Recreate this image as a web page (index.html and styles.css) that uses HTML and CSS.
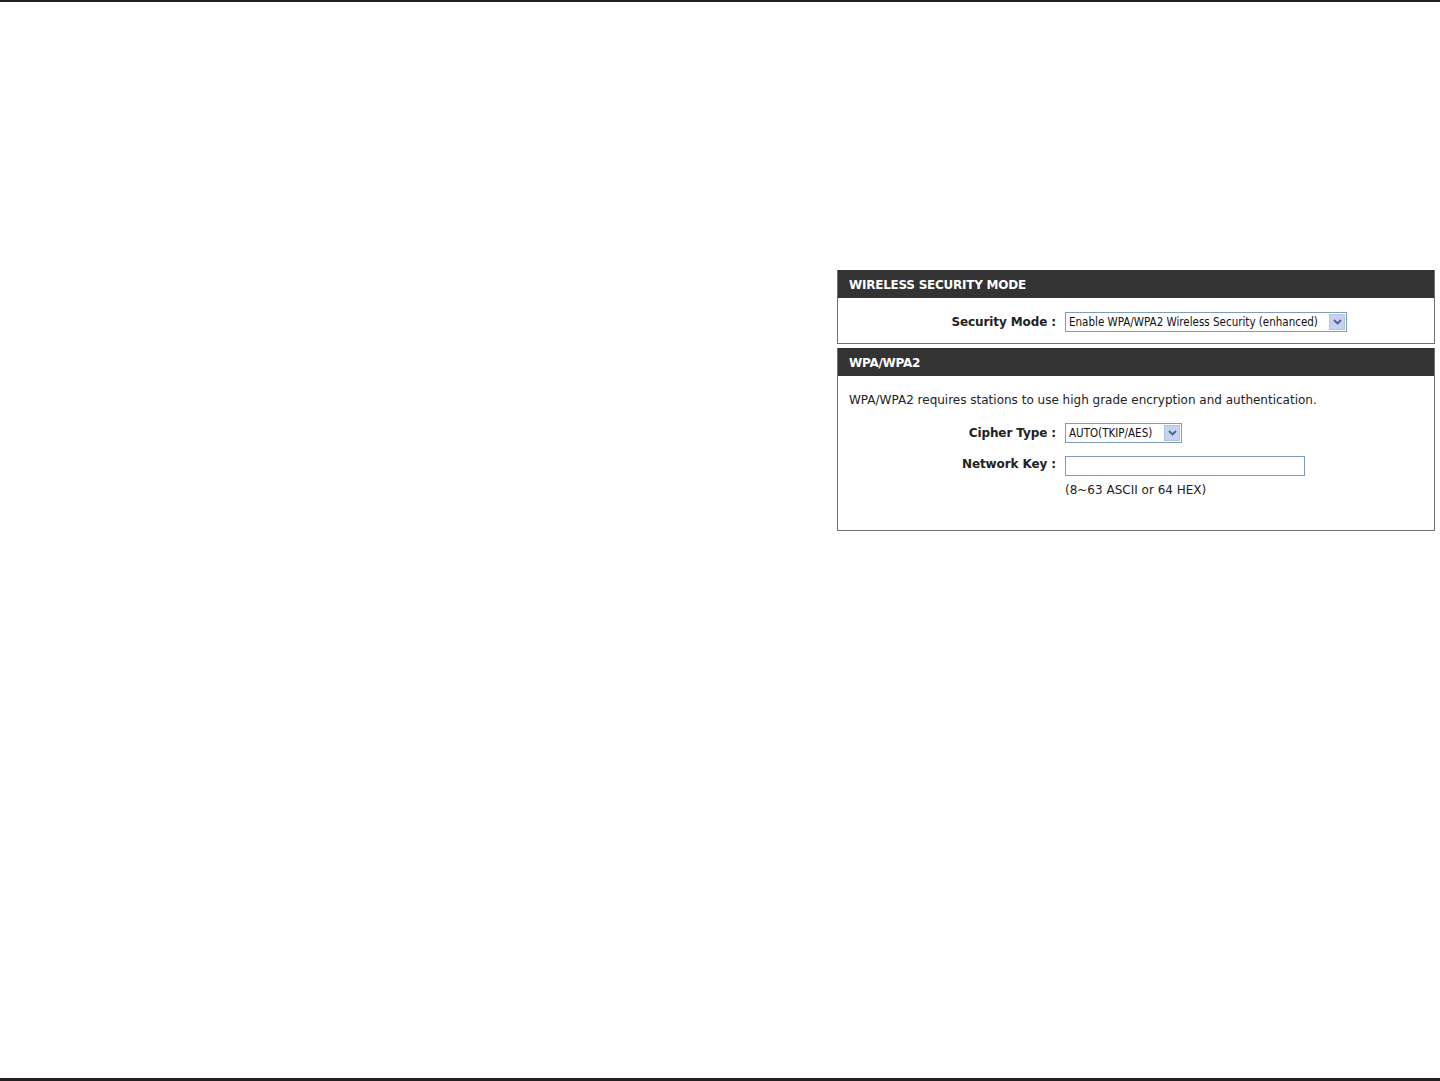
FILE: index.html
```html
<!DOCTYPE html>
<html lang="en">
<head>
    <meta charset="UTF-8">
    <title>Wireless Security</title>
    <link rel="stylesheet" href="styles.css">
</head>
<body>
    <div class="page">
        <div class="top-rule"></div>

        <div class="content">
            <div class="panels">
                <!-- Security mode box -->
                <div class="box">
                    <div class="box-head">WIRELESS SECURITY MODE</div>
                    <div class="box-body mode-body">
                        <div class="row">
                            <span class="label">Security Mode :</span>
                            <div class="select wide">
                                <span class="select-text">Enable WPA/WPA2 Wireless Security (enhanced)</span>
                                <span class="select-btn">
                                    <svg width="9" height="6" viewBox="0 0 9 6"><path d="M1 1 L4.5 4.5 L8 1" fill="none" stroke="#4d6185" stroke-width="1.8"/></svg>
                                </span>
                            </div>
                        </div>
                    </div>
                </div>

                <!-- WPA box -->
                <div class="box">
                    <div class="box-head">WPA/WPA2</div>
                    <div class="box-body wpa-body">
                        <p class="desc">WPA/WPA2 requires stations to use high grade encryption and authentication.</p>
                        <div class="row">
                            <span class="label">Cipher Type :</span>
                            <div class="select small">
                                <span class="select-text">AUTO(TKIP/AES)</span>
                                <span class="select-btn">
                                    <svg width="9" height="6" viewBox="0 0 9 6"><path d="M1 1 L4.5 4.5 L8 1" fill="none" stroke="#4d6185" stroke-width="1.8"/></svg>
                                </span>
                            </div>
                        </div>
                        <div class="row key-row">
                            <span class="label">Network Key :</span>
                            <div class="field">
                                <input class="text-input" type="text">
                                <span class="hint">(8~63 ASCII or 64 HEX)</span>
                            </div>
                        </div>
                    </div>
                </div>
            </div>
        </div>

        <div class="bottom-rule"></div>
    </div>
</body>
</html>
```

FILE: styles.css
```css
body {
    margin: 0;
    padding: 0;
    background-color: #fff;
    font-family: "DejaVu Sans", sans-serif;
    font-size: 12px;
    color: #222;
}
.page {
    height: 1081px;
    display: flex;
    flex-direction: column;
}
.top-rule {
    height: 2px;
    background-color: #231f20;
}
.bottom-rule {
    height: 3px;
    background-color: #231f20;
}
.content {
    flex: 1;
    display: flex;
    justify-content: flex-end;
    padding: 268px 5px 0 0;
}
.panels {
    width: 598px;
    display: flex;
    flex-direction: column;
    gap: 4px;
}
.box {
    border: 1px solid #6f6f6f;
    border-top: none;
    background-color: #fff;
}
.box-head {
    background-color: #333;
    color: #fff;
    font-weight: bold;
    font-size: 12px;
    letter-spacing: -0.25px;
    height: 28px;
    line-height: 31px;
    padding-left: 11px;
}
.mode-body {
    padding: 14px 0 11px;
}
.wpa-body {
    padding: 17px 0 32px;
}
.desc {
    margin: 0 0 15px 11px;
    line-height: 15px;
}
.row {
    display: flex;
    align-items: center;
}
.key-row {
    align-items: flex-start;
    margin-top: 13px;
}
.label {
    width: 218px;
    text-align: right;
    font-weight: bold;
    letter-spacing: -0.1px;
    white-space: pre;
    padding-right: 9px;
}
.key-row .label {
    padding-top: 1px;
}
.select {
    display: flex;
    align-items: center;
    justify-content: space-between;
    height: 20px;
    border: 1px solid #7f9db9;
    background-color: #fff;
    font-family: "DejaVu Sans Condensed", sans-serif;
    font-size: 11.5px;
    color: #111;
    box-sizing: border-box;
}
.wide {
    width: 282px;
}
.small {
    width: 117px;
}
.select-text {
    padding-left: 3px;
}
.select-btn {
    width: 16px;
    height: 16px;
    margin-right: 1px;
    background-color: #c4d3f3;
    border: 1px solid #b2c3e6;
    box-sizing: border-box;
    display: flex;
    align-items: center;
    justify-content: center;
}
.field {
    display: flex;
    flex-direction: column;
    gap: 7px;
}
.text-input {
    width: 240px;
    height: 20px;
    margin: 0;
    border: 1px solid #7f9db9;
    box-sizing: border-box;
}
.hint {
    line-height: 15px;
}
```
